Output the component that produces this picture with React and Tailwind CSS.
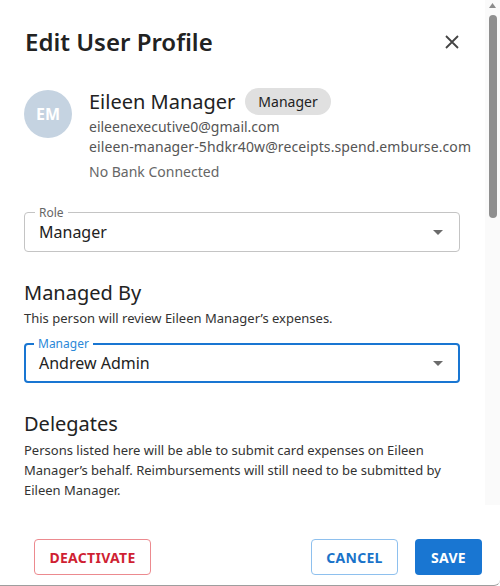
const font = { fontFamily: '"Noto Sans", "Open Sans", sans-serif' }

function CaretDown() {
  return (
    <svg width="10" height="5" viewBox="0 0 10 5" className="fill-[#6b6b6b]">
      <path d="M0 0h10L5 5z" />
    </svg>
  )
}

function SelectField({ label, value, focused }) {
  return (
    <div
      className={
        focused
          ? 'relative flex h-10 items-center justify-between rounded border-2 border-[#1976d2] pl-[13px] pr-[15px]'
          : 'relative flex h-10 items-center justify-between rounded border border-[#c4c4c4] pl-[14px] pr-4'
      }
    >
      <span
        className={
          focused
            ? 'absolute -top-[9px] left-[8px] bg-white px-[4px] text-[12px] leading-4 text-[#2b88d8]'
            : 'absolute -top-[8px] left-[10px] bg-white px-[4px] text-[12px] leading-4 text-[#666]'
        }
      >
        {label}
      </span>
      <span className="text-[16px] leading-6 text-[#222]">{value}</span>
      <CaretDown />
    </div>
  )
}

function Scrollbar() {
  return (
    <div className="flex w-[15px] shrink-0 flex-col items-center bg-[#fafafa]">
      <svg width="7" height="5" viewBox="0 0 7 5" className="mt-[3px] fill-[#8c8c8c]">
        <path d="M0 5h7L3.5 0z" />
      </svg>
      <div className="mt-[7px] h-[203px] w-[8px] rounded-full bg-[#8f8f8f]" />
    </div>
  )
}

export default function App() {
  return (
    <div
      style={font}
      className="flex h-[586px] w-[500px] flex-col overflow-hidden rounded-br-[6px] border-b border-[#9e9e9e] bg-white"
    >
      <div className="flex h-[505px] shrink-0">
        <div className="min-w-0 flex-1 overflow-hidden pl-6 pr-[25px]">
          <div className="flex items-center justify-between pt-[26px]">
            <h2 className="pl-px text-[24px] font-semibold leading-8 text-[#222]">Edit User Profile</h2>
            <svg width="14" height="14" viewBox="0 0 14 14" className="mr-[1px] stroke-[#444]" strokeWidth="1.8">
              <path d="M1 1l12 12M13 1L1 13" />
            </svg>
          </div>

          <div className="mt-[30px] flex gap-[17px]">
            <div className="mt-[2px] flex h-12 w-12 shrink-0 items-center justify-center rounded-full bg-[#c5d3e1] text-[16px] font-bold text-white">
              EM
            </div>
            <div className="whitespace-nowrap">
              <div className="flex items-center gap-[10px]">
                <span className="text-[20px] leading-[27px] text-[#222]">Eileen Manager</span>
                <span className="rounded-full bg-[#e0e0e0] px-[13px] text-[14px] leading-[27px] text-[#222]">
                  Manager
                </span>
              </div>
              <div className="mt-[2px] text-[14px] leading-5 text-[#555]">eileenexecutive0@gmail.com</div>
              <div className="text-[14px] leading-5 tracking-[0.1px] text-[#555]">
                eileen-manager-5hdkr40w@receipts.spend.emburse.com
              </div>
              <div className="mt-[5px] text-[14px] leading-5 text-[#666]">No Bank Connected</div>
            </div>
          </div>

          <div className="mt-[30px]">
            <SelectField label="Role" value="Manager" />
          </div>

          <h3 className="mt-[27px] text-[20px] leading-7 text-[#222]">Managed By</h3>
          <p className="mt-[3px] text-[13px] leading-4 text-[#333]">
            This person will review Eileen Manager’s expenses.
          </p>

          <div className="mt-[17px]">
            <SelectField label="Manager" value="Andrew Admin" focused />
          </div>

          <h3 className="mt-[27px] text-[20px] leading-7 text-[#222]">Delegates</h3>
          <p className="mt-[2px] text-[13px] leading-5 text-[#333]">
            Persons listed here will be able to submit card expenses on Eileen Manager’s behalf.
            Reimbursements will still need to be submitted by Eileen Manager.
          </p>
        </div>
        <Scrollbar />
      </div>

      <div className="flex items-center justify-between pl-[34px] pr-[18px] pt-[34px]">
        <button className="h-9 w-[117px] rounded border border-[#ec8a8f] text-[14px] font-bold tracking-[0.3px] text-[#cf1f33]">
          DEACTIVATE
        </button>
        <div className="flex gap-[17px]">
          <button className="h-9 w-[87px] rounded border border-[#8ec0ee] text-[14px] font-bold tracking-[0.3px] text-[#1a73c9]">
            CANCEL
          </button>
          <button className="h-9 w-[67px] rounded bg-[#1976d2] text-[14px] font-bold tracking-[0.3px] text-white">
            SAVE
          </button>
        </div>
      </div>
    </div>
  )
}
